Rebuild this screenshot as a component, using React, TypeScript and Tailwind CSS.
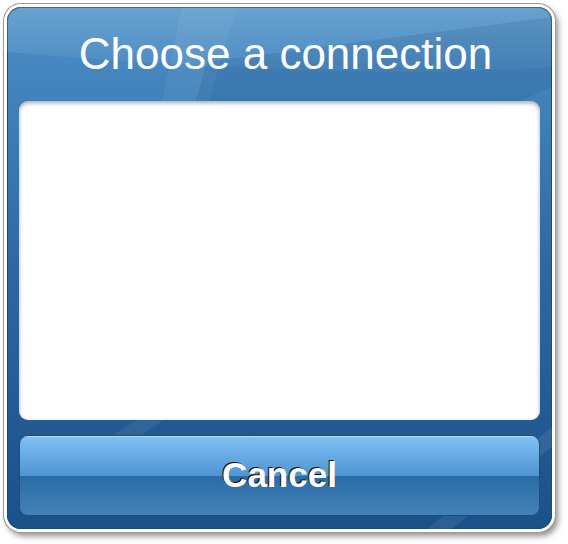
import React from 'react';

const font = { fontFamily: '"Liberation Sans", Arial, Helvetica, sans-serif' };

// decorative gloss shapes behind the panel content
const PanelGloss: React.FC = () => (
    <svg className="absolute inset-0 w-full h-full pointer-events-none" viewBox="0 0 545 522" preserveAspectRatio="none">
        <defs>
            <linearGradient id="topShine" x1="0" y1="0" x2="0" y2="1">
                <stop offset="0" stopColor="#ffffff" stopOpacity="0.16" />
                <stop offset="1" stopColor="#ffffff" stopOpacity="0.04" />
            </linearGradient>
        </defs>
        {/* light cap across the top */}
        <path d="M0 0 H545 V60 C400 70 200 62 0 45 Z" fill="url(#topShine)" />
        {/* diagonal wedge from top */}
        <path d="M175 0 L230 0 L140 300 L110 300 Z" fill="#ffffff" fillOpacity="0.05" />
        <path d="M200 55 L545 10 L545 80 L140 260 Z" fill="#0b2f5c" fillOpacity="0.12" />
        {/* diagonal stripes near the bottom */}
        <path d="M40 470 L150 400 L175 400 L60 480 Z" fill="#ffffff" fillOpacity="0.07" />
        <path d="M420 522 L545 420 L545 440 L445 522 Z" fill="#ffffff" fillOpacity="0.08" />
    </svg>
);

const App: React.FC = () => {
    return (
        <div className="w-[568px] h-[544px] bg-white" style={font}>
            <div className="ml-[4px] mt-[4px] w-[551px] h-[528px] rounded-[17px] bg-white p-[3px] shadow-[0_0_0_1px_#9a9a9a,3px_4px_6px_rgba(0,0,0,0.45)]">
                <div className="relative h-full w-full overflow-hidden rounded-[14px] bg-gradient-to-b from-[#4c90c8] via-[#2f67a2] to-[#1a5189] shadow-[inset_0_0_0_1px_#1b4a7a]">
                    <PanelGloss />
                    <div className="relative flex h-full flex-col px-[12px] pb-[13px]">
                        <div className="flex h-[94px] items-center justify-center pb-[1px] pl-[12px]">
                            <h1 className="text-[44px] leading-none text-white">Choose a connection</h1>
                        </div>
                        <div className="h-[319px] rounded-[9px] bg-white shadow-[inset_0_2px_4px_rgba(0,0,0,0.35)]" />
                        <button className="mt-[15px] relative h-[81px] w-full overflow-hidden rounded-[9px] border border-[#1c4d7d] bg-gradient-to-b from-[#80c2f6] via-[#4f95d4] to-[#2d70ab]">
                            <div className="absolute inset-x-0 bottom-0 h-1/2 bg-gradient-to-b from-[#2b6ba5] to-[#4282b8]" />
                            <div className="absolute inset-x-0 top-0 h-px bg-white/40" />
                            <span className="relative text-[35px] font-bold text-white [text-shadow:-1px_-1px_0_#0d0d0d]">Cancel</span>
                        </button>
                    </div>
                </div>
            </div>
        </div>
    );
};

export default App;
